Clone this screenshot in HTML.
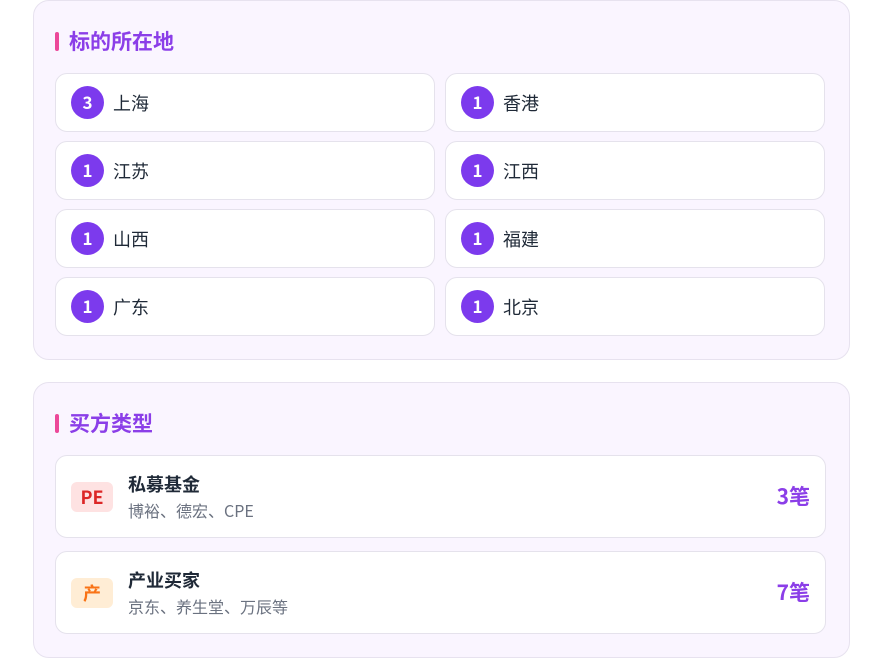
<!DOCTYPE html>
<html><head><meta charset="utf-8"><style>
*{box-sizing:border-box;margin:0;padding:0}
body{width:884px;height:666px;background:#fff;font-family:"Noto Sans CJK SC",sans-serif;position:relative;overflow:hidden}
.card{position:absolute;left:33px;width:817px;background:#faf5ff;border:1px solid #e7e2ef;border-radius:16px}
.t{position:absolute;left:21px;font-size:21px;font-weight:bold;color:#8b3ee8;padding-left:14px;line-height:24px}
.t:before{content:"";position:absolute;left:0;top:3px;width:4px;height:19px;border-radius:2px;background:#ec4899}
.it{position:absolute;width:380px;height:59px;background:#fff;border:1px solid #e5e2ec;border-radius:12px}
.c{position:absolute;left:15px;top:12px;width:33px;height:33px;border-radius:50%;background:#7c3aed;color:#fff;font-weight:bold;font-size:17px;text-align:center;line-height:32px}
.n{position:absolute;left:57px;top:16px;font-size:18px;color:#1f2937;line-height:26px}
.b{position:absolute;left:21px;width:771px;height:83px;background:#fff;border:1px solid #e5e2ec;border-radius:12px}
.bd{position:absolute;left:15px;top:26px;width:42px;height:30px;border-radius:6px;text-align:center;line-height:30px;font-weight:bold;font-size:18px}
.nm{position:absolute;left:72px;top:16px;font-size:18px;font-weight:bold;color:#1f2937;line-height:24px}
.sb{position:absolute;left:72px;top:43px;font-size:16px;color:#6b7280;line-height:22px}
.ct{position:absolute;right:15px;top:26px;font-size:21px;font-weight:bold;color:#8b3ee8;line-height:28px}
</style></head><body>
<div class="card" style="top:0;height:360px">
<div class="t" style="top:28px">标的所在地</div>
<div class="it" style="left:21px;top:72px"><div class="c">3</div><div class="n">上海</div></div>
<div class="it" style="left:411px;top:72px"><div class="c">1</div><div class="n">香港</div></div>
<div class="it" style="left:21px;top:140px"><div class="c">1</div><div class="n">江苏</div></div>
<div class="it" style="left:411px;top:140px"><div class="c">1</div><div class="n">江西</div></div>
<div class="it" style="left:21px;top:208px"><div class="c">1</div><div class="n">山西</div></div>
<div class="it" style="left:411px;top:208px"><div class="c">1</div><div class="n">福建</div></div>
<div class="it" style="left:21px;top:276px"><div class="c">1</div><div class="n">广东</div></div>
<div class="it" style="left:411px;top:276px"><div class="c">1</div><div class="n">北京</div></div>
</div>
<div class="card" style="top:382px;height:276px">
<div class="t" style="top:28px">买方类型</div>
<div class="b" style="top:72px"><div class="bd" style="background:#fee2e2;color:#dc2626">PE</div><div class="nm">私募基金</div><div class="sb">博裕、德宏、CPE</div><div class="ct">3笔</div></div>
<div class="b" style="top:168px"><div class="bd" style="background:#ffedd5;color:#f97316">产</div><div class="nm">产业买家</div><div class="sb">京东、养生堂、万辰等</div><div class="ct">7笔</div></div>
</div>
</body></html>
